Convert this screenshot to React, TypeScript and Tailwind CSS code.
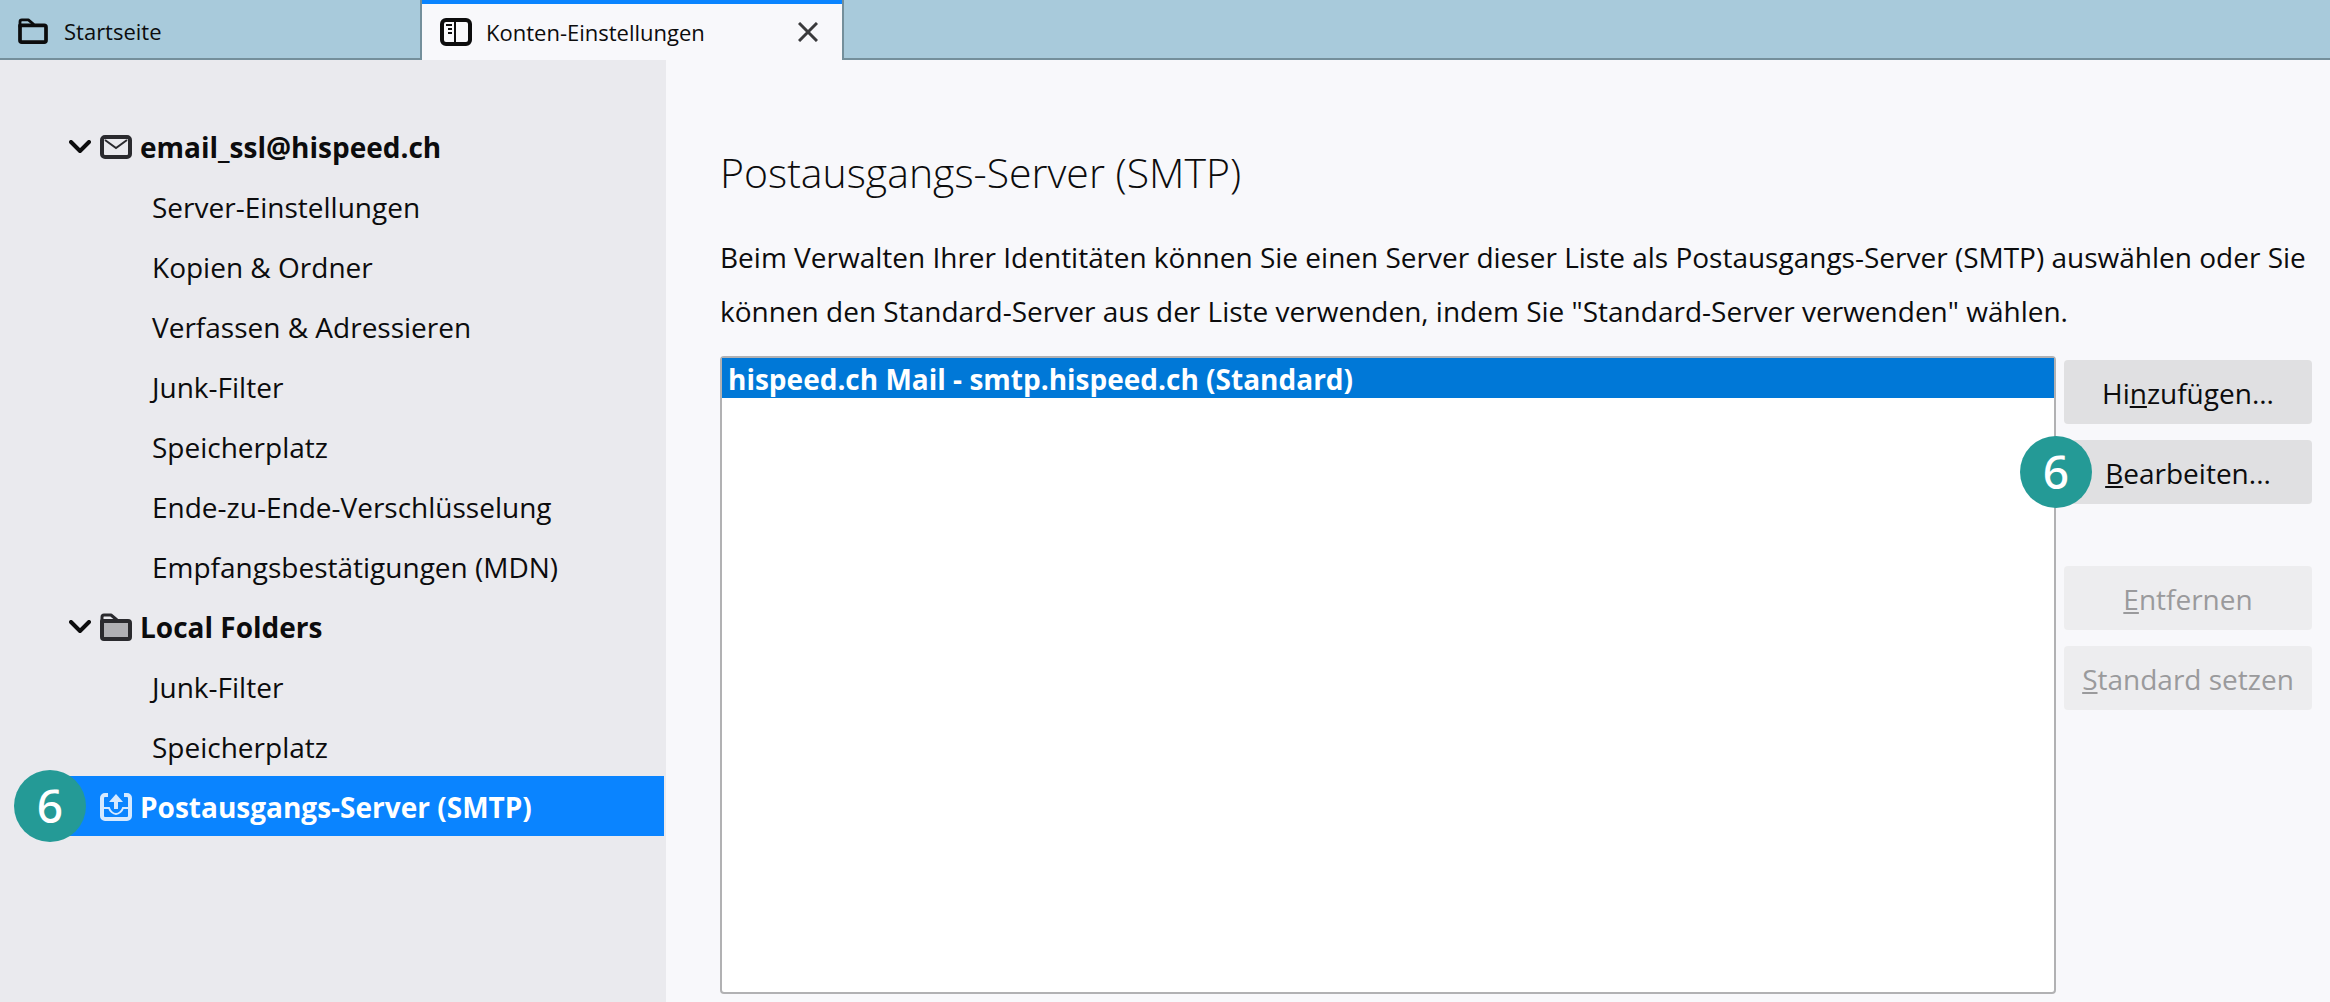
import clsx from "clsx";

const accountItems = [
  "Server-Einstellungen",
  "Kopien & Ordner",
  "Verfassen & Adressieren",
  "Junk-Filter",
  "Speicherplatz",
  "Ende-zu-Ende-Verschlüsselung",
  "Empfangsbestätigungen (MDN)",
];

const folderItems = ["Junk-Filter", "Speicherplatz"];

function FolderIcon({ className, fill = "none" }: { className?: string; fill?: string }) {
  return (
    <svg viewBox="0 0 32 28" className={className} fill="none" stroke="currentColor" strokeWidth="4" strokeLinejoin="round">
      <path d="M2 8h26a2 2 0 0 1 2 2v14a2 2 0 0 1-2 2H4a2 2 0 0 1-2-2z" fill={fill} />
      <path d="M2 10V4a2 2 0 0 1 2-2h7l6 5" strokeWidth="3" />
    </svg>
  );
}

function SettingsTabIcon() {
  return (
    <svg viewBox="0 0 32 28" className="h-7 w-8 shrink-0" fill="none" stroke="currentColor">
      <rect x="2" y="2" width="28" height="24" rx="4" strokeWidth="4" />
      <path d="M15 2v24" strokeWidth="2" />
      <path d="M6 7h6M8 11h4M8 15h4" strokeWidth="2" />
    </svg>
  );
}

function MailIcon() {
  return (
    <svg viewBox="0 0 32 24" className="h-6 w-8 shrink-0 text-[#2a2a2e]" fill="none" stroke="currentColor">
      <rect x="2" y="2" width="28" height="20" rx="3" strokeWidth="4" />
      <path d="M5 5l11 8L27 5" strokeWidth="2" />
    </svg>
  );
}

function OutboxIcon() {
  return (
    <svg viewBox="0 0 32 30" className="h-[30px] w-8 shrink-0 text-[#d5e9ff]" fill="none" stroke="currentColor" strokeWidth="4">
      <path d="M8 3H5a3 3 0 0 0-3 3v18a3 3 0 0 0 3 3h22a3 3 0 0 0 3-3V6a3 3 0 0 0-3-3h-3" />
      <path d="M3 16h6c1 3 4 6 7 6s6-3 7-6h6" strokeWidth="2" />
      <path d="M16 17V8" />
      <path d="M16 2l7 8H9z" fill="currentColor" stroke="none" />
    </svg>
  );
}

function Twisty() {
  return (
    <svg viewBox="0 0 22 14" className="h-[14px] w-[22px] shrink-0" fill="none" stroke="currentColor" strokeWidth="4">
      <path d="M2 2l9 9 9-9" strokeLinecap="round" strokeLinejoin="round" />
    </svg>
  );
}

function StepBadge({ className }: { className?: string }) {
  return (
    <span
      className={clsx(
        "absolute z-10 flex size-[72px] items-center justify-center rounded-full bg-[#249a96] pb-0.5 font-['Noto_Sans',sans-serif] text-[46px] font-medium leading-none text-white",
        className
      )}
    >
      6
    </span>
  );
}

function GroupRow({ icon, label }: { icon: React.ReactNode; label: string }) {
  return (
    <button type="button" aria-expanded="true" className="flex h-[60px] w-full items-center pt-0.5 pl-[69px] text-left font-bold">
      <Twisty />
      <span className="ml-[9px] flex">{icon}</span>
      <span className="ml-2">{label}</span>
    </button>
  );
}

function SubItems({ items }: { items: string[] }) {
  return (
    <ul>
      {items.map((item) => (
        <li key={item}>
          <a href="#" className="flex h-[60px] items-center pt-0.5 pl-[152px]">
            {item}
          </a>
        </li>
      ))}
    </ul>
  );
}

// The access key letter is underlined, as in native dialogs
function ActionButton({ before = "", accessKey, after, disabled }: { before?: string; accessKey: string; after: string; disabled?: boolean }) {
  return (
    <button
      type="button"
      accessKey={accessKey}
      disabled={disabled}
      className={clsx(
        "h-16 w-full whitespace-nowrap rounded pt-0.5",
        disabled ? "bg-[#ededef] text-[#9a9a9c]" : "bg-[#e0e0e2]"
      )}
    >
      {before}
      <span className="underline decoration-2 underline-offset-2">{accessKey}</span>
      {after}
    </button>
  );
}

export default function App() {
  return (
    <div className="flex min-h-screen flex-col bg-[#f8f8fb] font-['Open_Sans',sans-serif] text-[28px] leading-[40px] text-[#0c0c0d]">
      <header className="flex h-[60px] bg-[#a8cadb] text-[22px]">
        <button type="button" className="flex w-[422px] items-center border-r-2 border-b-2 border-[#748f9b] pt-1 pl-[18px] text-left">
          <FolderIcon className="h-[26px] w-[30px] shrink-0" />
          <span className="ml-4">Startseite</span>
        </button>
        <div className="flex w-[420px] items-center border-t-4 border-[#0a84ff] bg-[#f8f8fb] pr-6 pl-[18px]">
          <SettingsTabIcon />
          <span className="ml-[14px] flex-1">Konten-Einstellungen</span>
          <button type="button" aria-label="Tab schließen" className="text-[#3a3a3c]">
            <svg viewBox="0 0 20 20" className="size-5" fill="none" stroke="currentColor" strokeWidth="3">
              <path d="M1 1l18 18M19 1L1 19" />
            </svg>
          </button>
        </div>
        <div className="flex-1 border-b-2 border-l-2 border-[#748f9b]" />
      </header>

      <div className="flex flex-1">
        <nav className="w-[666px] shrink-0 bg-[#eaeaee] pt-14 pr-[2px]">
          <GroupRow icon={<MailIcon />} label="email_ssl@hispeed.ch" />
          <SubItems items={accountItems} />
          <GroupRow icon={<FolderIcon className="h-7 w-8 shrink-0 text-[#2a2a2e]" fill="#b0b0b4" />} label="Local Folders" />
          <SubItems items={folderItems} />
          <div className="relative pl-[60px]">
            <StepBadge className="-top-[6px] left-[14px]" />
            <a href="#" aria-current="page" className="flex h-[60px] items-center bg-[#0a84ff] pt-0.5 pl-10 font-bold text-white">
              <OutboxIcon />
              <span className="ml-2">Postausgangs-Server (SMTP)</span>
            </a>
          </div>
        </nav>

        <main className="flex min-w-0 flex-1 flex-col pt-[82px] pr-[18px] pb-2 pl-[54px]">
          <h1 className="text-[41px] leading-[60px] font-light">Postausgangs-Server (SMTP)</h1>
          <p className="mt-7 -mr-4 leading-[54px]">
            Beim Verwalten Ihrer Identitäten können Sie einen Server dieser Liste als Postausgangs-Server (SMTP) auswählen oder Sie
            können den Standard-Server aus der Liste verwenden, indem Sie "Standard-Server verwenden" wählen.
          </p>
          <div className="mt-[18px] flex flex-1 gap-2">
            <ul role="listbox" aria-label="Postausgangs-Server" className="flex-1 rounded-sm border-2 border-[#b1b1b3] bg-white">
              <li role="option" aria-selected="true" className="flex h-10 items-center bg-[#0078d7] pt-0.5 pl-[6px] font-bold text-white">
                hispeed.ch Mail - smtp.hispeed.ch (Standard)
              </li>
            </ul>
            <div className="w-[248px] pt-1">
              <ActionButton before="Hi" accessKey="n" after="zufügen..." />
              <div className="relative mt-4">
                <StepBadge className="-top-1 -left-11" />
                <ActionButton accessKey="B" after="earbeiten..." />
              </div>
              <div className="mt-[62px] flex flex-col gap-4">
                <ActionButton accessKey="E" after="ntfernen" disabled />
                <ActionButton accessKey="S" after="tandard setzen" disabled />
              </div>
            </div>
          </div>
        </main>
      </div>
    </div>
  );
}
